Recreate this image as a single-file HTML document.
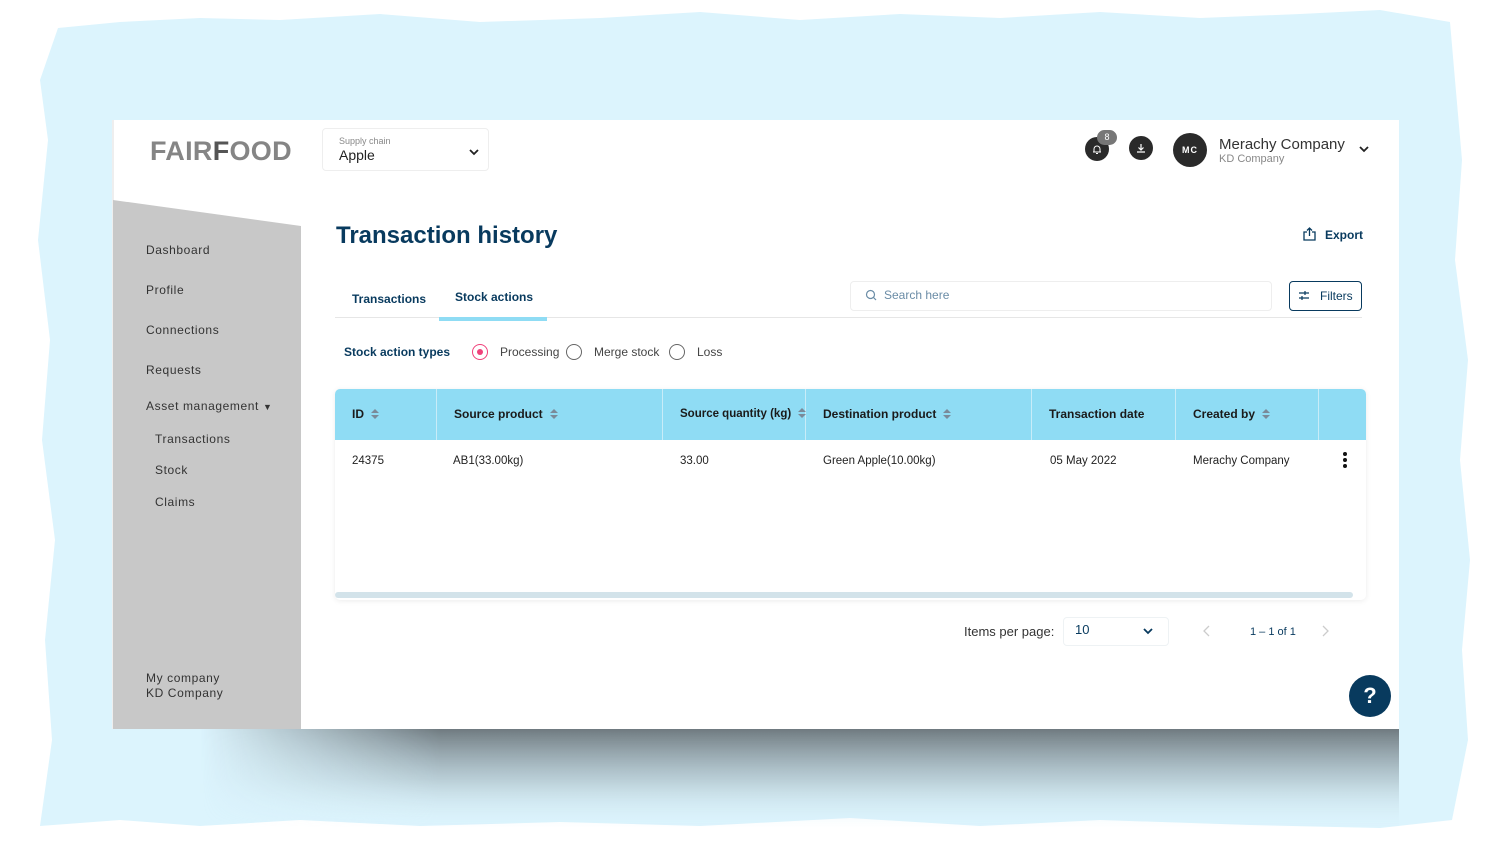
<!DOCTYPE html>
<html><head><meta charset="utf-8"><style>
*{box-sizing:border-box;margin:0;padding:0}
body{width:1505px;height:850px;position:relative;overflow:hidden;background:#fff;font-family:"Liberation Sans",sans-serif}
.abs{position:absolute}
.card{left:112px;top:120px;width:1287px;height:609px;background:#fff}
.side{left:113px;top:200px;width:188px;height:529px;background:#c8c8c8;clip-path:polygon(0 0,100% 26px,100% 100%,0 100%)}
.nav{position:absolute;font-size:12px;color:#333;letter-spacing:.6px}
.th{position:absolute;top:0;height:51px;line-height:51px;font-size:12px;font-weight:bold;color:#1a1a1a;padding-left:17px;border-right:1px solid #c8ecf8;white-space:nowrap}
.td{position:absolute;top:66px;font-size:11.5px;color:#222}
.sort{display:inline-block;margin-left:7px;vertical-align:middle;width:8px;height:11px;position:relative}
.sort:before{content:"";position:absolute;left:0;top:0;border:4px solid transparent;border-bottom:4px solid #7a8a99;border-top:0}
.sort:after{content:"";position:absolute;left:0;top:6px;border:4px solid transparent;border-top:4px solid #7a8a99;border-bottom:0}
.radio{position:absolute;top:344px;width:16px;height:16px;border-radius:50%;border:1.5px solid #666}
.rl{position:absolute;top:345px;font-size:12px;color:#444}
</style></head><body>
<svg class="abs" style="left:0;top:0" width="1505" height="850">
<defs><linearGradient id="sh" x1="0" y1="0" x2="0" y2="1"><stop offset="0" stop-color="#6f7a80"/><stop offset=".5" stop-color="#a9bcc4" stop-opacity=".7"/><stop offset="1" stop-color="#dcf4fd" stop-opacity="0"/></linearGradient>
<linearGradient id="shx" x1="0" y1="0" x2="1" y2="0"><stop offset="0" stop-color="#fff" stop-opacity="0"/><stop offset=".2" stop-color="#fff"/><stop offset="1" stop-color="#fff"/></linearGradient>
<mask id="m"><rect x="200" y="729" width="1199" height="110" fill="url(#shx)"/></mask></defs>
<polygon fill="#dcf4fd" points="58,28 120,22 200,18 280,20 380,14 480,22 600,18 700,12 800,20 900,14 1000,18 1100,12 1200,18 1300,14 1380,10 1450,22 1455,80 1462,160 1455,260 1468,360 1460,460 1470,560 1462,650 1468,740 1452,820 1380,828 1250,825 1100,820 980,826 850,818 700,826 560,822 420,826 300,820 200,826 120,820 40,826 52,740 45,640 55,540 42,440 50,340 38,240 48,140 40,80"/>
<rect x="200" y="729" width="1199" height="100" fill="url(#sh)" mask="url(#m)"/>
</svg>
<div class="abs card"></div>
<div class="abs" style="left:112px;top:120px;width:2px;height:609px;background:#eee"></div>
<div class="abs side"></div>
<div class="abs" style="left:150px;top:136px;font-size:27px;font-weight:bold;color:#858585;letter-spacing:0.3px">FAIR<span style="color:#555">F</span>OOD</div>
<div class="abs" style="left:322px;top:128px;width:167px;height:43px;border:1px solid #eee;border-radius:4px"></div>
<div class="abs" style="left:339px;top:136px;font-size:9px;color:#888">Supply chain</div>
<div class="abs" style="left:339px;top:147px;font-size:14px;color:#222">Apple</div>
<svg class="abs" style="left:468px;top:147px" width="12" height="10"><path d="M2 3l4 4 4-4" stroke="#222" stroke-width="1.8" fill="none"/></svg>
<div class="abs" style="left:1085px;top:137px;width:24px;height:24px;border-radius:50%;background:#2a2a2a"></div>
<svg class="abs" style="left:1091px;top:143px" width="12" height="12"><path d="M3 9V6a3 3 0 016 0v3zM2 9h8M5 10.5h2" stroke="#fff" stroke-width="1" fill="none"/></svg>
<div class="abs" style="left:1097px;top:130px;width:20px;height:15px;border-radius:8px;background:#777;color:#fff;font-size:9px;text-align:center;line-height:15px">8</div>
<div class="abs" style="left:1129px;top:136px;width:24px;height:24px;border-radius:50%;background:#2a2a2a"></div>
<svg class="abs" style="left:1135px;top:142px" width="12" height="12"><path d="M6 2v6M3.5 5.5L6 8l2.5-2.5M2 10h8" stroke="#fff" stroke-width="1.2" fill="none"/></svg>
<div class="abs" style="left:1173px;top:133px;width:34px;height:34px;border-radius:50%;background:#2a2a2a;color:#fff;font-size:9px;font-weight:bold;text-align:center;line-height:34px;letter-spacing:1px">MC</div>
<div class="abs" style="left:1219px;top:136px;font-size:15px;color:#333">Merachy Company</div>
<div class="abs" style="left:1219px;top:153px;font-size:11px;color:#888">KD Company</div>
<svg class="abs" style="left:1358px;top:144px" width="12" height="10"><path d="M2 3l4 4 4-4" stroke="#222" stroke-width="1.8" fill="none"/></svg>

<div class="nav" style="left:146px;top:243px">Dashboard</div>
<div class="nav" style="left:146px;top:283px">Profile</div>
<div class="nav" style="left:146px;top:323px">Connections</div>
<div class="nav" style="left:146px;top:363px">Requests</div>
<div class="nav" style="left:146px;top:399px">Asset management <span style="font-size:9px">▼</span></div>
<div class="nav" style="left:155px;top:432px">Transactions</div>
<div class="nav" style="left:155px;top:463px">Stock</div>
<div class="nav" style="left:155px;top:495px">Claims</div>
<div class="nav" style="left:146px;top:671px;line-height:15px">My company<br>KD Company</div>

<div class="abs" style="left:336px;top:222px;font-size:24px;font-weight:bold;color:#083a5e">Transaction history</div>
<svg class="abs" style="left:1302px;top:226px" width="15" height="16"><path d="M5 6H2v8h11V6h-3M7.5 10V2M5 4.5l2.5-2.5 2.5 2.5" stroke="#083a5e" stroke-width="1.3" fill="none"/></svg>
<div class="abs" style="left:1325px;top:228px;font-size:12px;font-weight:bold;color:#083a5e">Export</div>
<div class="abs" style="left:352px;top:292px;font-size:12px;font-weight:bold;color:#083a5e">Transactions</div>
<div class="abs" style="left:455px;top:290px;font-size:12px;font-weight:bold;color:#083a5e">Stock actions</div>
<div class="abs" style="left:335px;top:317px;width:1027px;height:1px;background:#e6e6e6"></div>
<div class="abs" style="left:439px;top:317px;width:108px;height:4px;background:#8fdcf4"></div>
<div class="abs" style="left:850px;top:281px;width:422px;height:30px;border:1px solid #eee;border-radius:4px"></div>
<svg class="abs" style="left:865px;top:289px" width="12" height="13"><circle cx="5.5" cy="5.5" r="4" stroke="#6a8ca6" stroke-width="1.2" fill="none"/><path d="M8.5 8.5l2.5 2.5" stroke="#6a8ca6" stroke-width="1.2"/></svg>
<div class="abs" style="left:884px;top:288px;font-size:12px;color:#6a8ca6">Search here</div>
<div class="abs" style="left:1289px;top:281px;width:73px;height:30px;border:1px solid #083a5e;border-radius:4px"></div>
<svg class="abs" style="left:1298px;top:290px" width="12" height="11"><path d="M1 3h10M1 8h10" stroke="#083a5e" stroke-width="1.2"/><path d="M7 1v4M4 6v4" stroke="#083a5e" stroke-width="1.2"/></svg>
<div class="abs" style="left:1320px;top:289px;font-size:12px;color:#083a5e">Filters</div>

<div class="abs" style="left:344px;top:345px;font-size:12px;font-weight:bold;color:#083a5e">Stock action types</div>
<div class="radio" style="left:472px;border-color:#f0407a"></div>
<div class="abs" style="left:477px;top:349px;width:6px;height:6px;border-radius:50%;background:#f0407a"></div>
<div class="rl" style="left:500px">Processing</div>
<div class="radio" style="left:566px"></div>
<div class="rl" style="left:594px">Merge stock</div>
<div class="radio" style="left:669px"></div>
<div class="rl" style="left:697px">Loss</div>

<div class="abs" style="left:335px;top:389px;width:1031px;height:211px;background:#fff;border-radius:5px;box-shadow:0 1px 6px rgba(0,0,0,.08);overflow:hidden">
<div style="position:absolute;left:0;top:0;width:100%;height:51px;background:#8fdcf4"></div>
<div class="th" style="left:0;width:102px">ID<span class="sort"></span></div>
<div class="th" style="left:102px;width:226px">Source product<span class="sort"></span></div>
<div class="th" style="left:328px;width:143px;font-size:11.5px">Source quantity (kg)<span class="sort"></span></div>
<div class="th" style="left:471px;width:226px">Destination product<span class="sort"></span></div>
<div class="th" style="left:697px;width:144px">Transaction date</div>
<div class="th" style="left:841px;width:143px">Created by<span class="sort"></span></div>
<div class="td" style="left:17px">24375</div>
<div class="td" style="left:118px">AB1(33.00kg)</div>
<div class="td" style="left:345px">33.00</div>
<div class="td" style="left:488px">Green Apple(10.00kg)</div>
<div class="td" style="left:715px">05 May 2022</div>
<div class="td" style="left:858px">Merachy Company</div>
<div style="position:absolute;left:1008px;top:63px;width:4px;line-height:5px;font-size:0">
<div style="width:4px;height:4px;border-radius:50%;background:#111;margin-bottom:2px"></div><div style="width:4px;height:4px;border-radius:50%;background:#111;margin-bottom:2px"></div><div style="width:4px;height:4px;border-radius:50%;background:#111"></div></div>
<div style="position:absolute;left:0;top:203px;width:1018px;height:6px;border-radius:3px;background:#d3e3ea"></div>
</div>

<div class="abs" style="left:964px;top:624px;font-size:13px;color:#333">Items per page:</div>
<div class="abs" style="left:1063px;top:617px;width:106px;height:29px;border:1px solid #eef2f4;border-radius:4px"></div>
<div class="abs" style="left:1075px;top:622px;font-size:13px;color:#083a5e">10</div>
<svg class="abs" style="left:1142px;top:626px" width="12" height="10"><path d="M2 3l4 4 4-4" stroke="#083a5e" stroke-width="1.8" fill="none"/></svg>
<svg class="abs" style="left:1202px;top:625px" width="10" height="12"><path d="M7 1L2 6l5 5" stroke="#ccc" stroke-width="1.3" fill="none"/></svg>
<div class="abs" style="left:1250px;top:626px;font-size:11px;color:#083a5e">1 – 1 of 1</div>
<svg class="abs" style="left:1320px;top:625px" width="10" height="12"><path d="M3 1l5 5-5 5" stroke="#ccc" stroke-width="1.3" fill="none"/></svg>
<div class="abs" style="left:1349px;top:675px;width:42px;height:42px;border-radius:50%;background:#083a5e;color:#fff;font-size:22px;font-weight:bold;text-align:center;line-height:42px">?</div>
</body></html>
